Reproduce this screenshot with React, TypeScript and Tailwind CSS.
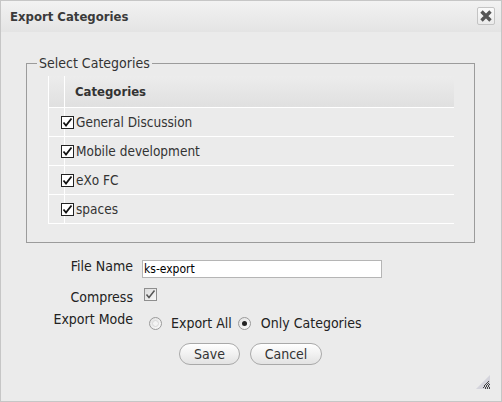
import React, { useState } from 'react';

const categories = ['General Discussion', 'Mobile development', 'eXo FC', 'spaces'];

const BlackCheck: React.FC = () => (
  <span className="w-[13px] h-[13px] shrink-0 border border-[#222] bg-white flex items-center justify-center">
    <svg width="11" height="11" viewBox="0 0 11 11">
      <path d="M1.5 5.5 L4 8.5 L9.5 1.5" fill="none" stroke="#111" strokeWidth="1.8" />
    </svg>
  </span>
);

const Radio: React.FC<{ checked?: boolean }> = ({ checked }) => (
  <span className="w-[13px] h-[13px] shrink-0 rounded-full border border-[#9a9a9a] bg-gradient-to-br from-[#e2e2e2] to-[#fbfbfb] flex items-center justify-center">
    {checked ? (
      <span className="w-[5px] h-[5px] rounded-full bg-[#222]" />
    ) : (
      <span className="w-[7px] h-[7px] rounded-full border border-[#d8d8d8] bg-[#f4f4f4]" />
    )}
  </span>
);

export default function App() {
  const [fileName, setFileName] = useState('ks-export');

  return (
    <div className="w-[502px] h-[402px] relative flex flex-col bg-[#ebebeb] border border-[#c6c6c6] text-[14px] leading-[16px] text-[#333] font-['DejaVu_Sans_Condensed','DejaVu_Sans',sans-serif]">
      {/* title bar */}
      <div className="h-[31px] shrink-0 flex items-center justify-between pl-[9px] pr-[6px] bg-gradient-to-b from-[#f2f2f2] to-[#e4e4e4]">
        <span className="font-bold text-[13px] text-[#3a3a3a]">Export Categories</span>
        <button className="w-[18px] h-[18px] mt-[-1px] flex items-center justify-center border border-[#c4c4c4] rounded-[2px] bg-gradient-to-b from-[#fafafa] to-[#ebebeb]">
          <svg width="14" height="14" viewBox="0 0 14 14">
            <path d="M2.5 2.5 L11.5 11.5 M11.5 2.5 L2.5 11.5" stroke="#555" strokeWidth="3.4" />
          </svg>
        </button>
      </div>

      {/* categories */}
      <div className="pl-[25px] pr-[26px] pt-[23px]">
        <fieldset className="border border-[#9b9b9b] pb-[18px]">
          <legend className="ml-[10px] px-[2px]">Select Categories</legend>
          <div className="pl-[21px] pt-[5px] w-[427px]">
            <div className="h-[32px] flex border-b border-white bg-gradient-to-b from-[#ececec] to-[#e0e0e0]">
              <div className="w-[17px] border-l border-r border-white" />
              <div className="pl-[10px] flex items-center font-bold text-[13px]">Categories</div>
            </div>
            {categories.map((c) => (
              <div key={c} className="h-[29px] flex border-b border-white">
                <div className="w-[17px] border-l border-r border-white" />
                <div className="ml-[-4px] flex items-center gap-[2px] text-[13.5px]">
                  <BlackCheck />
                  <span>{c}</span>
                </div>
              </div>
            ))}
          </div>
        </fieldset>
      </div>

      {/* options */}
      <div className="flex flex-col pt-[15px] text-[#222]">
        <div className="flex items-start">
          <div className="w-[132px] text-right">File Name</div>
          <input
            value={fileName}
            onChange={(e) => setFileName(e.target.value)}
            className="ml-[9px] mt-[2px] w-[240px] h-[18px] border border-[#b5b5b5] bg-white px-[1px] text-[12px] text-black outline-none"
          />
        </div>
        <div className="flex items-start mt-[10px]">
          <div className="w-[132px] mt-[1px] text-right">Compress</div>
          <span className="ml-[11px] w-[13px] h-[13px] border border-[#8e8e8e] bg-gradient-to-br from-[#dcdcdc] to-[#f7f7f7] flex items-center justify-center">
            <svg width="11" height="11" viewBox="0 0 11 11">
              <path d="M1.5 5.5 L4 8.5 L9.5 1.5" fill="none" stroke="#555" strokeWidth="1.5" />
            </svg>
          </span>
        </div>
        <div className="flex items-start mt-[6px]">
          <div className="w-[132px] text-right">Export Mode</div>
          <div className="flex items-center mt-[4px] ml-[16px]">
            <Radio />
            <span className="ml-[9px] mr-[6px]">Export All</span>
            <Radio checked />
            <span className="ml-[10px]">Only Categories</span>
          </div>
        </div>
        <div className="flex justify-center gap-[10px] mt-[12px] pr-[1px]">
          <button className="w-[61px] h-[22px] rounded-full border border-[#a9a9a9] bg-gradient-to-b from-white to-[#e3e3e3] text-[#333]">Save</button>
          <button className="w-[72px] h-[22px] rounded-full border border-[#a9a9a9] bg-gradient-to-b from-white to-[#e3e3e3] text-[#333]">Cancel</button>
        </div>
      </div>

      {/* resize grip */}
      <svg className="absolute right-[11px] bottom-[12px]" width="14" height="14" viewBox="0 0 14 14">
        <polygon points="14,0 14,14 0,14" fill="#d4d4dc" />
        <g fill="#444">
          <rect x="12" y="6" width="1" height="1" />
          <rect x="10" y="8" width="1" height="1" />
          <rect x="12" y="8" width="1" height="1" />
          <rect x="8" y="10" width="1" height="1" />
          <rect x="10" y="10" width="1" height="1" />
          <rect x="12" y="10" width="1" height="1" />
          <rect x="7" y="12" width="1" height="1" />
          <rect x="9" y="12" width="1" height="1" />
          <rect x="11" y="12" width="1" height="1" />
          <rect x="13" y="12" width="1" height="1" />
          <rect x="11" y="7" width="1" height="1" />
          <rect x="9" y="9" width="1" height="1" />
          <rect x="11" y="9" width="1" height="1" />
          <rect x="13" y="9" width="1" height="1" />
          <rect x="8" y="11" width="1" height="1" />
          <rect x="10" y="11" width="1" height="1" />
          <rect x="12" y="11" width="1" height="1" />
          <rect x="9" y="13" width="1" height="1" />
          <rect x="11" y="13" width="1" height="1" />
          <rect x="13" y="13" width="1" height="1" />
        </g>
      </svg>
    </div>
  );
}
